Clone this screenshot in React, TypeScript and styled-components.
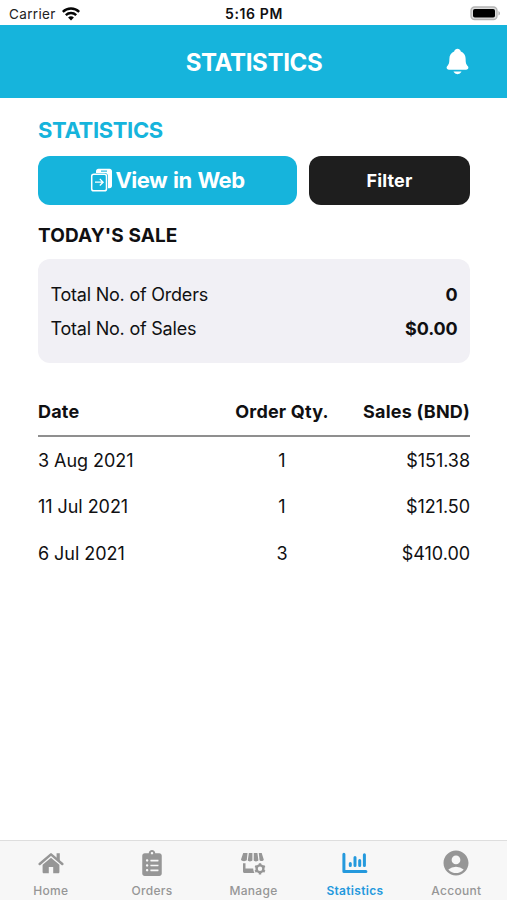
import React from "react";
import styled, { createGlobalStyle, css } from "styled-components";
import { FaClipboardList } from "react-icons/fa";
import { IoNotifications } from "react-icons/io5";
import { MdAccountCircle } from "react-icons/md";

const cyan = "#16b4dc";

const GlobalStyle = createGlobalStyle`
  * { box-sizing: border-box; }
  body {
    margin: 0;
    background: #fff;
    color: #101012;
    font-family: Inter, "Liberation Sans", sans-serif;
  }
`;

const Screen = styled.div`
  display: flex;
  flex-direction: column;
  width: 507px;
  height: 900px;
  background: #fff;
  overflow: hidden;
  white-space: nowrap;
`;

const StatusBar = styled.div`
  display: grid;
  grid-template-columns: 1fr auto 1fr;
  align-items: center;
  height: 25px;
  flex: none;
  padding: 2px 6px 0 9px;
  font-size: 13.5px;
  line-height: 20px;
`;

const Carrier = styled.div`
  display: flex;
  align-items: center;
  gap: 6px;
  letter-spacing: 0.35px;
  color: #222;
`;

const Clock = styled.div`
  font-size: 14px;
  font-weight: 600;
  letter-spacing: 0.6px;
  padding-right: 2px;
`;

const Battery = styled.svg`
  justify-self: end;
  display: block;
`;

const Header = styled.header`
  display: grid;
  grid-template-columns: 1fr auto 1fr;
  align-items: center;
  height: 73px;
  flex: none;
  padding: 0 35px 0 36px;
  background: ${cyan};
  color: #fff;
`;

const HeaderTitle = styled.h1`
  grid-column: 2;
  margin: 1px 0 0;
  font-size: 24px;
  font-weight: 650;
  letter-spacing: -0.35px;
`;

const Bell = styled(IoNotifications)`
  justify-self: end;
`;

const Main = styled.main`
  display: flex;
  flex-direction: column;
  flex: 1;
  padding: 18px 37px 0 38px;
`;

const PageTitle = styled.h2`
  margin: 0 0 11.5px;
  font-size: 22px;
  line-height: 28px;
  font-weight: 650;
  letter-spacing: -0.35px;
  color: ${cyan};
`;

const Actions = styled.div`
  display: grid;
  grid-template-columns: 259px 161px;
  gap: 12px;
`;

const Button = styled.button<{ $dark?: boolean }>`
  display: flex;
  align-items: center;
  justify-content: center;
  gap: 2px;
  height: 49px;
  padding: 0;
  border: 0;
  border-radius: 12px;
  font-family: inherit;
  color: #fff;
  ${({ $dark }) =>
    $dark
      ? css`background: #1e1e1e; font-size: 18px; font-weight: 700; letter-spacing: 0.15px;`
      : css`background: ${cyan}; font-size: 22px; font-weight: 650; letter-spacing: -0.5px; word-spacing: 1px;`}
`;

const SectionTitle = styled.h3`
  margin: 18px 0 11.5px;
  font-size: 19px;
  line-height: 25px;
  font-weight: 700;
  letter-spacing: 0.1px;
`;

const Summary = styled.dl`
  display: flex;
  flex-direction: column;
  justify-content: center;
  height: 104px;
  margin: 0;
  padding: 2px 12.5px 0;
  border-radius: 12px;
  background: #f1f0f5;
`;

const SummaryRow = styled.div`
  display: flex;
  justify-content: space-between;
  font-size: 18px;
  line-height: 34px;
`;

const Label = styled.dt`
  letter-spacing: -0.22px;
`;

const Amount = styled.dd`
  margin: 0;
  font-weight: 700;
  letter-spacing: -0.15px;
`;

const Table = styled.div`
  display: flex;
  flex-direction: column;
  margin-top: 25px;
`;

const TableRow = styled.div<{ $head?: boolean }>`
  display: grid;
  grid-template-columns: 1fr 100px 138px;
  align-items: center;
  height: 46.6px;
  font-size: 18px;
  letter-spacing: -0.05px;
  ${({ $head }) =>
    $head &&
    css`
      height: 49px;
      border-bottom: 2px solid #8f8f8f;
      font-weight: 700;
      letter-spacing: 0.2px;
    `}
`;

const Cell = styled.span<{ $align?: "center" | "right" }>`
  text-align: ${({ $align }) => $align ?? "left"};
`;

const TabBar = styled.nav`
  display: grid;
  grid-template-columns: repeat(5, 1fr);
  height: 60px;
  flex: none;
  border-top: 1px solid #dedede;
  background: #f7f7f7;
`;

const Tab = styled.a<{ $active?: boolean }>`
  display: flex;
  flex-direction: column;
  align-items: center;
  padding-top: 8px;
  gap: 6px;
  font-size: 12px;
  line-height: 15px;
  font-weight: ${({ $active }) => ($active ? 600 : 500)};
  letter-spacing: 0.3px;
  color: ${({ $active }) => ($active ? "#2499dd" : "#969696")};
`;

const TabIcon = styled.span`
  display: flex;
  align-items: center;
  justify-content: center;
  height: 28px;
`;

const WifiIcon = () => (
  <svg width="18" height="14" viewBox="0 0 18 14" fill="none" stroke="#050505" strokeWidth="2.4">
    <path d="M.8 4.9C5.4.4 12.6.4 17.2 4.9" />
    <path d="M3.8 8.1c3-2.8 7.4-2.8 10.4 0" />
    <path d="M6.1 10.4c1.7-1.5 4.1-1.5 5.8 0L9 13.4Z" fill="#050505" stroke="none" />
  </svg>
);

const WebIcon = () => (
  <svg width="23" height="24" viewBox="0 0 23 24" fill="none">
    <path d="M6 5V3.2C6 1.8 7 .8 8.4.8h11.2c1.4 0 2.4 1 2.4 2.4v14.6c0 1.4-1 2.4-2.4 2.4H18V8.4C18 6.6 16.8 5 15 5Z" fill="#fff" />
    <path d="M11 3.1h6" stroke={cyan} strokeWidth="1.1" />
    <rect x="1.7" y="6.3" width="14.8" height="16.5" rx="2.1" stroke="#fff" strokeWidth="1.5" />
    <path d="M5 14.2h8M9.8 10.9l3.3 3.3-3.3 3.3" stroke="#fff" strokeWidth="1.3" />
  </svg>
);

const HomeIcon = () => (
  <svg width="26" height="22" viewBox="0 0 26 22" fill="currentColor">
    <path d="M1.7 12 13 2.4 24.3 12" fill="none" stroke="currentColor" strokeWidth="2.5" strokeLinecap="round" strokeLinejoin="round" />
    <path d="M18.6 1.2h3.2v8.6l-3.2-2.7Z" />
    <path d="M13 5.7 21.4 12.8v7.2c0 .8-.5 1.3-1.3 1.3h-4.9v-6.4h-4.4v6.4H5.9c-.8 0-1.3-.5-1.3-1.3v-7.2Z" />
  </svg>
);

const StoreIcon = () => (
  <svg width="26" height="23" viewBox="0 0 26 23" fill="currentColor">
    <path d="M3.2 1h4.3L6.8 8.1C6.3 9.7 1.2 9.7 1 7.6ZM8.9 1h3.5v7.3c-.4 1.5-4.6 1.5-4.6 0ZM13.8 1h3.6l1 7.3c-.3 1.5-4.5 1.5-4.7 0ZM18.8 1h2.9l2.1 6.7c-.3 1.6-3.8 1.9-4.3.4Z" />
    <path d="M3 11.2h2.5v5.2h7.7c.1 1.8.6 3.5 1.4 4.6H4.7C3.5 21 3 20.3 3 19.2Z" />
    <g fill="none" stroke="currentColor" strokeWidth="2.4">
      <circle cx="20" cy="16.8" r="3.4" />
      <path d="M20 11.2v2.2M20 20.2v2.2M15.2 14l1.9 1.1M22.9 18.5l1.9 1.1M15.2 19.6l1.9-1.1M22.9 15.1l1.9-1.1" />
    </g>
  </svg>
);

const ChartIcon = () => (
  <svg width="26" height="22" viewBox="0 0 26 22" fill="none" stroke="currentColor">
    <path d="M1.9 2.3v17.3h22" strokeWidth="3" strokeLinecap="round" strokeLinejoin="round" />
    <path d="M8.3 11.6v2M13 5.4v8.2M17.7 8.4v5.2M22.4 2.8v10.8" strokeWidth="3" strokeLinecap="round" />
  </svg>
);

const sales = [
  { date: "3 Aug 2021", qty: 1, total: "$151.38" },
  { date: "11 Jul 2021", qty: 1, total: "$121.50" },
  { date: "6 Jul 2021", qty: 3, total: "$410.00" },
];

const tabs = [
  { name: "Home", icon: <HomeIcon /> },
  { name: "Orders", icon: <FaClipboardList size={26} /> },
  { name: "Manage", icon: <StoreIcon /> },
  { name: "Statistics", icon: <ChartIcon />, active: true },
  { name: "Account", icon: <MdAccountCircle size={30} /> },
];

export default function App() {
  return (
    <>
      <GlobalStyle />
      <Screen>
        <StatusBar>
          <Carrier>
            Carrier
            <WifiIcon />
          </Carrier>
          <Clock>5:16 PM</Clock>
          <Battery width="31" height="15" viewBox="0 0 31 15">
            <rect x="1" y="1" width="26" height="12.5" rx="3.6" fill="#ddd" stroke="#b4b4b4" strokeWidth="1.3" />
            <rect x="3" y="3" width="22" height="8.5" rx="1.8" fill="#000" />
            <path d="M28.5 5v4.6c1.9-.8 1.9-3.8 0-4.6Z" fill="#aaa" />
          </Battery>
        </StatusBar>
        <Header>
          <HeaderTitle>STATISTICS</HeaderTitle>
          <Bell size={29} />
        </Header>
        <Main>
          <PageTitle>STATISTICS</PageTitle>
          <Actions>
            <Button>
              <WebIcon />
              View in Web
            </Button>
            <Button $dark>Filter</Button>
          </Actions>
          <SectionTitle>TODAY'S SALE</SectionTitle>
          <Summary>
            <SummaryRow>
              <Label>Total No. of Orders</Label>
              <Amount>0</Amount>
            </SummaryRow>
            <SummaryRow>
              <Label>Total No. of Sales</Label>
              <Amount>$0.00</Amount>
            </SummaryRow>
          </Summary>
          <Table>
            <TableRow $head>
              <Cell>Date</Cell>
              <Cell $align="center">Order Qty.</Cell>
              <Cell $align="right">Sales (BND)</Cell>
            </TableRow>
            {sales.map((sale) => (
              <TableRow key={sale.date}>
                <Cell>{sale.date}</Cell>
                <Cell $align="center">{sale.qty}</Cell>
                <Cell $align="right">{sale.total}</Cell>
              </TableRow>
            ))}
          </Table>
        </Main>
        <TabBar>
          {tabs.map((tab) => (
            <Tab key={tab.name} $active={tab.active}>
              <TabIcon>{tab.icon}</TabIcon>
              {tab.name}
            </Tab>
          ))}
        </TabBar>
      </Screen>
    </>
  );
}
